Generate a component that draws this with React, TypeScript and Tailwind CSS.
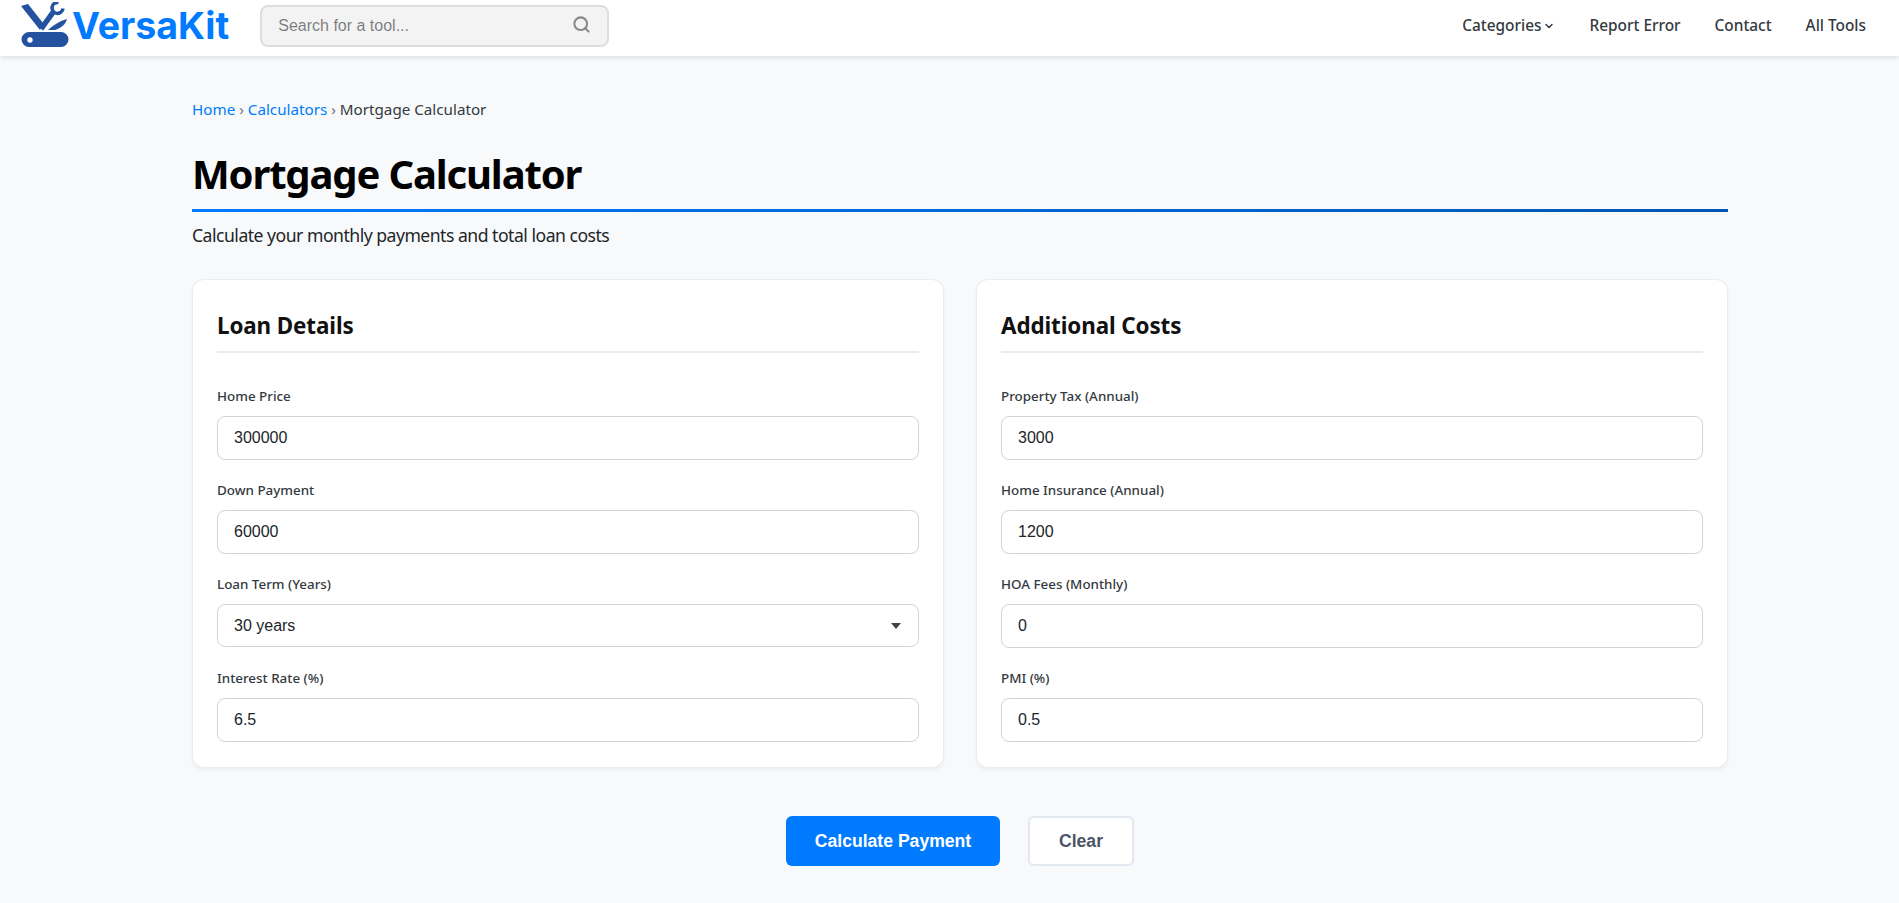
import {Search, ChevronDown} from 'lucide-react';

const sans = "font-['Noto_Sans','Open_Sans',sans-serif]";
const arial = "font-['Liberation_Sans',Arial,sans-serif]";

function Logo() {
    return (
        <svg width="50" height="48" viewBox="0 0 50 48" className="shrink-0" fill="#24529f">
            <path d="M1 4 L8 2 L23 21 L20 28 Z" />
            <path d="M21 27 L34 9" stroke="#24529f" strokeWidth="5.5" />
            <path d="M38.5 0.5 A5.5 5.5 0 1 0 43 6.5" fill="none" stroke="#24529f" strokeWidth="3.5" />
            <path d="M28 28 C33 23 40 19 47 17 C46 22 41 26 35 28 Z" />
            <path fillRule="evenodd" d="M9 30 H41 A7.5 7.5 0 0 1 41 45 H9 A7.5 7.5 0 0 1 9 30 Z M10 35.3 A2.7 2.7 0 1 0 10 40.7 A2.7 2.7 0 1 0 10 35.3 Z" />
        </svg>
    );
}

function Field({label, value}: {label: string; value: string}) {
    return (
        <div className="flex flex-col">
            <label className="text-[13.4px] leading-[21px] font-medium text-[#343a40] mb-[9px]">{label}</label>
            <input
                readOnly
                value={value}
                className={`h-11 w-full rounded-lg border border-[#ced4da] bg-white px-4 text-base text-[#212529] outline-none ${arial}`}
            />
        </div>
    );
}

function Card({title, children}: {title: string; children: React.ReactNode}) {
    return (
        <section className="flex-1 rounded-xl border border-[#e9ecef] bg-white px-6 pt-[30px] pb-[25px] shadow-[0_2px_4px_rgba(0,0,0,0.05)]">
            <h2 className="border-b-2 border-[#e9ecef] pb-[9px] text-[22.4px] leading-8 font-bold tracking-[-0.1px] text-[#111] mb-[33px]">{title}</h2>
            <div className="flex flex-col gap-5">{children}</div>
        </section>
    );
}

export default function App() {
    return (
        <div className={`min-h-[903px] bg-[#f8f9fa] ${sans}`}>
            <header className="flex h-14 items-center justify-between bg-white pb-1 pl-5 pr-[33px] shadow-[0_2px_4px_rgba(0,0,0,0.1)]">
                <div className="flex items-center">
                    <Logo />
                    <span className="ml-0.5 font-['Inter',sans-serif] text-[37.5px] leading-none font-bold text-[#007bff]">VersaKit</span>
                    <div className="relative ml-[31px] w-[349px]">
                        <input
                            readOnly
                            placeholder="Search for a tool..."
                            className={`h-[42px] w-full rounded-lg border-2 border-[#ddd] bg-[#f3f3f3] pl-4 pr-10 text-base outline-none ${arial}`}
                        />
                        <Search className="absolute right-[18px] top-[10px] size-[19px] text-[#888]" strokeWidth={2.6} />
                    </div>
                </div>
                <nav className="flex items-center gap-[34px] text-[15.4px] font-medium text-[#343a40]">
                    <a className="flex items-center gap-0.5">Categories <ChevronDown className="size-3" strokeWidth={3} /></a>
                    <a>Report Error</a>
                    <a>Contact</a>
                    <a>All Tools</a>
                </nav>
            </header>

            <main className="ml-[192px] w-[1536px] pt-[42px]">
                <nav className="text-[15.2px] leading-[22px] text-[#343a40]">
                    <a className="text-[#007bff]">Home</a>
                    <span className="text-[#6c757d]"> › </span>
                    <a className="text-[#007bff]">Calculators</a>
                    <span className="text-[#6c757d]"> › </span>
                    <span>Mortgage Calculator</span>
                </nav>
                <h1 className="mt-[26px] pb-[7px] text-[40px] leading-[56px] font-bold tracking-[-1.15px] text-black">Mortgage Calculator</h1>
                <div className="h-[3px] bg-linear-to-r/srgb from-[#007bff] to-[#0056b3]" />
                <p className="mt-[11px] text-[17.6px] leading-6 tracking-[-0.5px] text-[#212529]">Calculate your monthly payments and total loan costs</p>

                <div className="mt-[32px] flex gap-8">
                    <Card title="Loan Details">
                        <Field label="Home Price" value="300000" />
                        <Field label="Down Payment" value="60000" />
                        <div className="flex flex-col">
                            <label className="text-[13.4px] leading-[21px] font-medium text-[#343a40] mb-[9px]">Loan Term (Years)</label>
                            <div className="relative mb-px">
                                <select className={`h-[43px] w-full appearance-none rounded-lg border border-[#ced4da] bg-white px-4 text-base text-[#212529] outline-none ${arial}`}>
                                    <option>30 years</option>
                                </select>
                                <svg width="10" height="6" viewBox="0 0 10 6" className="absolute right-[18px] top-[19px]" fill="#3f4450">
                                    <path d="M0 0 H10 L5 6 Z" />
                                </svg>
                            </div>
                        </div>
                        <Field label="Interest Rate (%)" value="6.5" />
                    </Card>
                    <Card title="Additional Costs">
                        <Field label="Property Tax (Annual)" value="3000" />
                        <Field label="Home Insurance (Annual)" value="1200" />
                        <Field label="HOA Fees (Monthly)" value="0" />
                        <Field label="PMI (%)" value="0.5" />
                    </Card>
                </div>

                <div className={`mt-12 flex justify-center gap-7 text-[17.6px] font-bold ${arial}`}>
                    <button className="h-[50px] w-[214px] rounded-md bg-[#007bff] text-white">Calculate Payment</button>
                    <button className="h-[50px] w-[106px] rounded-md border-2 border-[#e2e8f0] bg-white text-[#4a5568]">Clear</button>
                </div>
            </main>
        </div>
    );
}
